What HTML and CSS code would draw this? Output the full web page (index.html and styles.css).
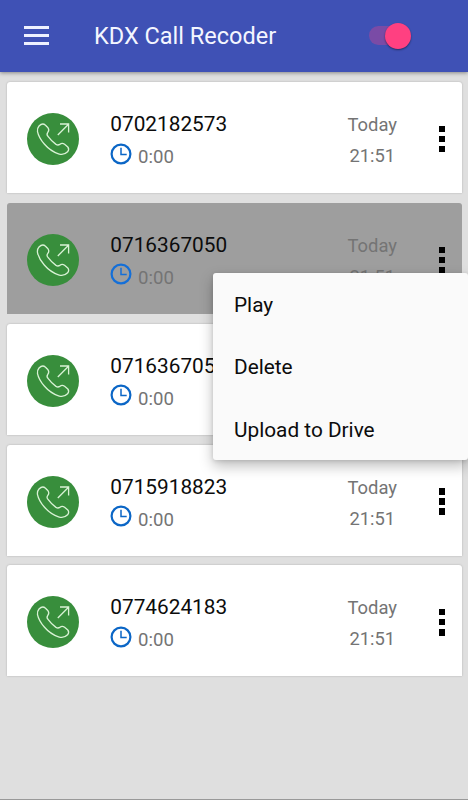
FILE: index.html
```html
<!DOCTYPE html>
<html lang="en">
<head>
<meta charset="utf-8">
<title>KDX Call Recoder</title>
<link rel="stylesheet" href="styles.css">
</head>
<body>
<svg class="defs" aria-hidden="true">
  <symbol id="call" viewBox="0 0 52 52">
    <circle cx="26" cy="26" r="26" fill="#388e3c"/>
    <g fill="none" stroke="#d9f2d5" stroke-width="1.3" stroke-linejoin="round">
      <path d="M12 13 Q15.5 9.5 18.5 12.2 L21 14.8 Q22.6 17 20.8 19.3 Q19.2 21.3 21 23.4 Q24.5 28.2 29 31.4 Q31 32.6 32.7 31.4 Q35.2 29.5 37.6 31.3 L40.8 34 Q42.6 36.2 40.6 38.8 Q37 42.5 31.5 40.8 Q23.5 38.2 17.3 31 Q11.8 24.7 10.5 18.6 Q10 15.3 12 13Z"/>
      <path d="M30.8 22 41.5 11.2M33 11h8.6v8.6" stroke-linejoin="miter"/>
    </g>
  </symbol>
  <symbol id="clock" viewBox="0 0 22 22">
    <g fill="none" stroke="currentColor">
      <circle cx="11" cy="11" r="9.4" stroke-width="2.2"/>
      <path d="M11 4.7v6.7h5.7" stroke-width="1.5"/>
    </g>
  </symbol>
</svg>
<header class="bar">
  <div class="burger"><i></i><i></i><i></i></div>
  <h1 class="title">KDX Call Recoder</h1>
  <div class="switch"><span class="knob"></span></div>
</header>
<main class="list">
  <article class="card">
    <svg class="avatar"><use href="#call"/></svg>
    <div class="info"><div class="number">0702182573</div><div class="duration"><svg class="clock"><use href="#clock"/></svg><span>0:00</span></div></div>
    <div class="when"><div>Today</div><div>21:51</div></div>
    <div class="more"><i></i><i></i><i></i></div>
  </article>
  <article class="card selected">
    <svg class="avatar"><use href="#call"/></svg>
    <div class="info"><div class="number">0716367050</div><div class="duration"><svg class="clock"><use href="#clock"/></svg><span>0:00</span></div></div>
    <div class="when"><div>Today</div><div>21:51</div></div>
    <div class="more"><i></i><i></i><i></i></div>
    <nav class="menu"><div>Play</div><div>Delete</div><div>Upload to Drive</div></nav>
  </article>
  <article class="card">
    <svg class="avatar"><use href="#call"/></svg>
    <div class="info"><div class="number">0716367050</div><div class="duration"><svg class="clock"><use href="#clock"/></svg><span>0:00</span></div></div>
    <div class="when"><div>Today</div><div>21:51</div></div>
    <div class="more"><i></i><i></i><i></i></div>
  </article>
  <article class="card">
    <svg class="avatar"><use href="#call"/></svg>
    <div class="info"><div class="number">0715918823</div><div class="duration"><svg class="clock"><use href="#clock"/></svg><span>0:00</span></div></div>
    <div class="when"><div>Today</div><div>21:51</div></div>
    <div class="more"><i></i><i></i><i></i></div>
  </article>
  <article class="card">
    <svg class="avatar"><use href="#call"/></svg>
    <div class="info"><div class="number">0774624183</div><div class="duration"><svg class="clock"><use href="#clock"/></svg><span>0:00</span></div></div>
    <div class="when"><div>Today</div><div>21:51</div></div>
    <div class="more"><i></i><i></i><i></i></div>
  </article>
</main>
</body>
</html>
```
FILE: styles.css
```css
* { box-sizing: border-box; }
body {
  margin: 0;
  height: 800px;
  overflow: hidden;
  background: #dfdfdf;
  border-bottom: 1px solid #999;
  font-family: Roboto, sans-serif;
  color: #0c0c0c;
}
.defs { display: none; }
.bar {
  display: flex;
  align-items: center;
  height: 72px;
  padding: 0 57px 0 24px;
  background: #3f51b5;
  box-shadow: 0 1px 4px rgba(0, 0, 0, .4);
}
.burger { display: flex; flex-direction: column; gap: 5px; width: 25px; margin-top: -2px; }
.burger i { height: 3px; background: #eef1ff; }
.title {
  margin: 0 auto 0 45px;
  font-size: 23.5px;
  line-height: 28px;
  font-weight: 400;
  color: #f4f6ff;
}
.switch {
  display: flex;
  align-items: center;
  justify-content: flex-end;
  width: 42px;
  height: 19px;
  margin-top: -1px;
  border-radius: 10px;
  background: linear-gradient(90deg, #7a4ba6 32px, transparent 32px);
}
.knob { flex: none; width: 26px; height: 26px; border-radius: 50%; background: #ff4081; box-shadow: 0 1px 2px rgba(0, 0, 0, .45); }
.list { display: flex; flex-direction: column; gap: 9.85px; padding: 10px 6.5px 0 7px; }
.card {
  position: relative;
  display: flex;
  height: 111px;
  border-radius: 3px 3px 0 0;
  background: #fff;
  box-shadow: 0 0 2px rgba(0, 0, 0, .25);
}
.avatar { flex: none; width: 52px; height: 52px; margin: 31px 0 0 20.3px; }
.info { flex: none; width: 222px; margin: 29px 0 0 31px; }
.number { font-size: 20.8px; line-height: 26px; }
.duration { display: flex; align-items: flex-start; font-size: 18.6px; line-height: 22px; color: #747474; }
.clock { width: 22px; height: 22px; margin: 5.5px 6px 0 -.3px; color: #0b66c6; }
.duration span { margin-top: 9px; }
.when { flex: none; width: 80px; margin-top: 27px; text-align: center; font-size: 18.4px; line-height: 31px; color: #747474; }
.more { display: flex; flex-direction: column; gap: 3.8px; margin: 43.7px 0 0 26.7px; }
.more i { width: 6.3px; height: 6.3px; background: #000; }
.selected { background: #9e9e9e; box-shadow: none; z-index: 2; }
.selected .clock { color: #146fd8; }
.menu {
  position: absolute;
  left: 206px;
  top: 69.7px;
  width: 255px;
  height: 187.7px;
  border-radius: 3px;
  background: #fafafa;
  box-shadow: 0 6px 14px rgba(0, 0, 0, .26), 0 1px 4px rgba(0, 0, 0, .12);
  font-size: 20.8px;
  line-height: 62.5px;
  padding: 1px 0 0 21px;
}
```
